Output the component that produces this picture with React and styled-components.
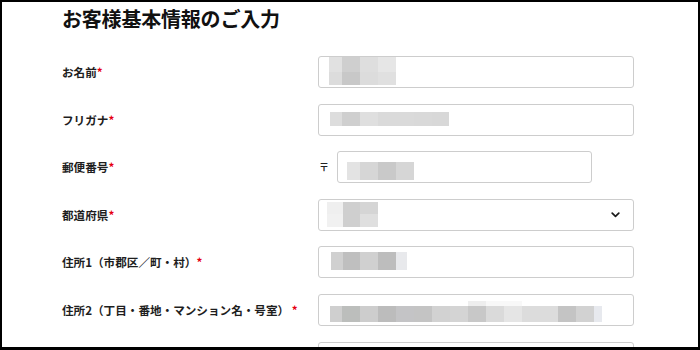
import React from "react";
import styled, { createGlobalStyle } from "styled-components";

const Global = createGlobalStyle`
  html, body { margin: 0; padding: 0; background: #fff; }
  body { font-family: "Noto Sans CJK JP", "Noto Sans", sans-serif; }
`;

const Frame = styled.div`
  width: 700px;
  height: 350px;
  box-sizing: border-box;
  border: 2px solid #000;
  border-bottom-width: 3px;
  overflow: hidden;
  background: #fff;
  padding: 3px 0 0 60px;
`;

const Title = styled.h2`
  margin: 0 0 23px;
  font-size: 20px;
  line-height: 28px;
  font-weight: 700;
  color: #111;
  letter-spacing: -0.2px;
`;

const Form = styled.div`
  display: grid;
  grid-template-columns: 256px 316px;
  row-gap: 15.6px;
  align-items: center;
`;

const Label = styled.div`
  font-size: 11.6px;
  font-weight: 700;
  color: #1e1e1e;
  line-height: 16px;
  white-space: pre;
`;

const Req = styled.span`
  color: #e60012;
  font-weight: 700;
`;

const Box = styled.div`
  box-sizing: border-box;
  height: 32px;
  width: ${(p) => p.$w || 316}px;
  border: 1px solid #cdcdcd;
  border-radius: 3px;
  background: #fff;
  display: flex;
  align-items: flex-start;
  justify-content: space-between;
  padding-left: ${(p) => p.$pl || 0}px;
  padding-right: 13px;
`;

const PostalWrap = styled.div`
  display: flex;
  align-items: center;
`;

const PostalMark = styled.span`
  width: 18px;
  padding-left: 1px;
  font-size: 10px;
  font-weight: 700;
  color: #222;
  line-height: 12px;
`;

const Mosaic = styled.div`
  display: flex;
  flex-direction: column;
  margin-top: ${(p) => p.$top}px;
`;

const MRow = styled.div`
  display: flex;
  height: ${(p) => p.$h}px;
`;

const Cell = styled.span`
  display: block;
  width: ${(p) => p.$w}px;
  height: 100%;
  background: ${(p) => p.$c};
`;

const Chevron = styled.svg`
  width: 9px;
  height: 6px;
  align-self: center;
`;

const W = 18;
const fields = [
  {
    label: "お名前",
    pl: 10,
    top: 0.3,
    rows: [
      { h: 14.3, cells: [[13, "#e1e1e1"], [W, "#cfcfcf"], [W, "#dedede"], [W, "#e6e6e6"]] },
      { h: 13.5, cells: [[13, "#dcdcdc"], [W, "#c8c8c8"], [W, "#dcdcdc"], [W, "#e0e0e0"]] },
    ],
  },
  {
    label: "フリガナ",
    pl: 11,
    top: 7.4,
    rows: [
      {
        h: 14,
        cells: [[12.3, "#dddddd"], [17.7, "#cfcfcf"], [W, "#dfdfdf"], [W, "#dadada"], [W, "#dadada"], [W, "#d9d9d9"], [17, "#d8d8d8"]],
      },
    ],
  },
  {
    label: "郵便番号",
    postal: true,
    pl: 9,
    top: 10,
    rows: [{ h: 17.7, cells: [[13.3, "#e3e3e3"], [W, "#d6d6d6"], [W, "#c9c9c9"], [W, "#d6d6d6"]] }],
  },
  {
    label: "都道府県",
    select: true,
    pl: 8,
    top: 2.4,
    rows: [
      { h: 12.3, cells: [[15.7, "#efefef"], [17.7, "#cfcfcf"], [W, "#d5d5d5"]] },
      { h: 12.7, cells: [[15.7, "#f1f1f1"], [17.7, "#cfcfcf"], [W, "#dfdfdf"]] },
    ],
  },
  {
    label: "住所1（市郡区／町・村）",
    pl: 12,
    top: 5,
    rows: [{ h: 17.3, cells: [[11.7, "#d0d0d0"], [17.7, "#bfbfbf"], [W, "#d0d0d0"], [W, "#bdbdbd"], [10.7, "#e8e9ec"]] }],
  },
  {
    label: "住所2（丁目・番地・マンション名・号室） ",
    pl: 11,
    top: 5.7,
    rows: [
      {
        h: 5,
        cells: [
          [12.3, "transparent"], [17.7, "transparent"], [W, "transparent"], [W, "transparent"], [W, "transparent"],
          [W, "transparent"], [W, "transparent"], [W, "transparent"], [17.7, "#eeeeee"], [W, "#f8f8f8"],
          [W, "#f8f8f8"],
        ],
      },
      {
        h: 16.7,
        cells: [
          [12.3, "#cfcfcf"], [17.7, "#bcbebc"], [W, "#cdcdcd"], [W, "#bcbcbc"], [W, "#c4c4c6"],
          [W, "#c4c4c4"], [W, "#d2d2d2"], [W, "#d4d4d4"], [17.7, "#c8c8c8"], [W, "#dadada"],
          [W, "#e5e5e5"], [W, "#dcdcdc"], [W, "#dcdcdc"], [W, "#c4c4c4"], [W, "#d2d2d2"], [8, "#e7e9ee"],
        ],
      },
    ],
  },
  { label: "", empty: true },
];

function MosaicBlock({ top, rows }) {
  return (
    <Mosaic $top={top}>
      {rows.map((r, i) => (
        <MRow key={i} $h={r.h}>
          {r.cells.map(([w, c], j) => (
            <Cell key={j} $w={w} $c={c} />
          ))}
        </MRow>
      ))}
    </Mosaic>
  );
}

function FieldBox({ f }) {
  const content = f.rows ? <MosaicBlock top={f.top} rows={f.rows} /> : null;
  if (f.postal) {
    return (
      <PostalWrap>
        <PostalMark>〒</PostalMark>
        <Box $w={255} $pl={f.pl}>{content}</Box>
      </PostalWrap>
    );
  }
  return (
    <Box $pl={f.pl}>
      {content}
      {f.select && (
        <Chevron viewBox="0 0 9 6">
          <path d="M1.2 1.2 L4.5 4.4 L7.8 1.2" fill="none" stroke="#1a1a1a" strokeWidth="1.7" strokeLinecap="round" strokeLinejoin="round" />
        </Chevron>
      )}
    </Box>
  );
}

export default function App() {
  return (
    <>
      <Global />
      <Frame>
        <Title>お客様基本情報のご入力</Title>
        <Form>
          {fields.map((f, i) => (
            <React.Fragment key={i}>
              <Label>
                {f.label}
                {!f.empty && <Req>*</Req>}
              </Label>
              <FieldBox f={f} />
            </React.Fragment>
          ))}
        </Form>
      </Frame>
    </>
  );
}
